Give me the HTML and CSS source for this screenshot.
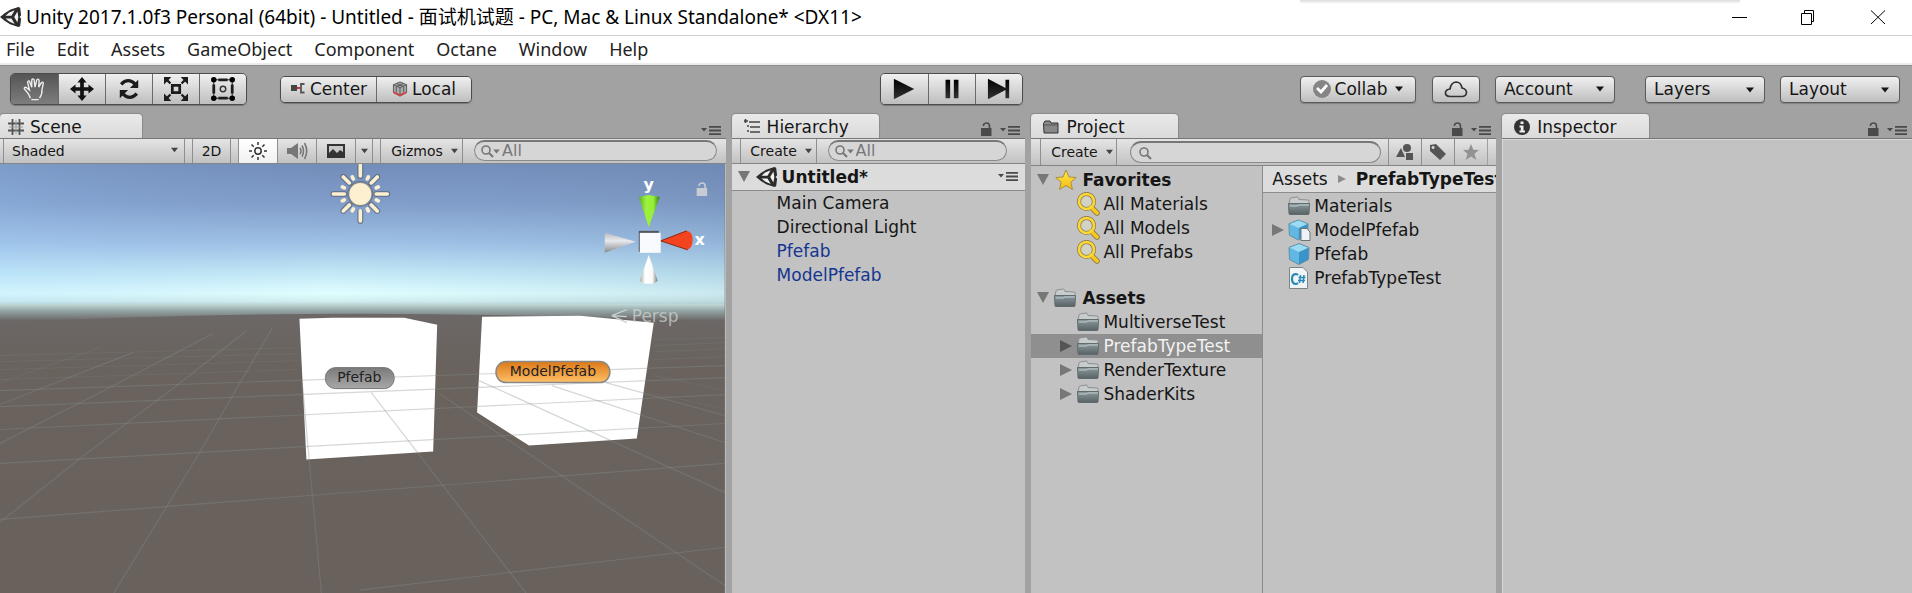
FILE: index.html
```html
<!DOCTYPE html>
<html lang="en">
<head>
<meta charset="utf-8">
<title>Unity 2017.1.0f3 Personal (64bit) - Untitled</title>
<link rel="stylesheet" href="styles.css">
</head>
<body>
<svg class="defs" aria-hidden="true">
  <defs>
    <linearGradient id="gFolder" x1="0" y1="0" x2="0" y2="1"><stop offset="0" stop-color="#8d999c"/><stop offset="1" stop-color="#566265"/></linearGradient>
    <linearGradient id="gGold" x1="0" y1="0" x2="0" y2="1"><stop offset="0" stop-color="#ffe94a"/><stop offset="1" stop-color="#f5bb12"/></linearGradient>
    <linearGradient id="gDark" x1="0" y1="0" x2="0" y2="1"><stop offset="0" stop-color="#000"/><stop offset="1" stop-color="#333"/></linearGradient>
  </defs>
  <symbol id="unity" viewBox="0 0 24 24">
    <path d="M0 12 5 8 11 4 20 1 22 2 23 10 21.500 12 23 14 22 22 20 23 11 20 5 16Z" fill="#2c2c2c"/>
    <path d="M6 10.500 12.500 10.500 16 4.500 10 7ZM6 13.500 12.500 13.500 16 19.500 10 17ZM15.500 12 19 6 20 12 19 18Z" fill="#f2f2f2"/>
  </symbol>
  <symbol id="folder" viewBox="0 0 24 20">
    <path d="M3 3Q3 2 4 2L10 1Q11 1 11.500 2L12 3.500 21 4Q22 4 22 5L22 8 2 8Z" fill="#c9cccc" stroke="#8b9091"/>
    <path d="M1.500 7.500H22.500L22 17.500Q22 18.500 21 18.500H3Q2 18.500 2 17.500Z" fill="url(#gFolder)" stroke="#616b6d"/>
    <path d="M2.500 10H10L12 9H22" fill="none" stroke="#bcd0d3"/>
  </symbol>
  <symbol id="glass" viewBox="0 0 24 24">
    <path d="M15 15 21 21" stroke="#8c8050" stroke-width="5.500" stroke-linecap="round"/>
    <circle cx="10.500" cy="9.500" r="7.500" fill="#d2d2c6" stroke="#8c8050" stroke-width="4.200"/>
    <path d="M15 15 21 21" stroke="#f8c71c" stroke-width="3.800" stroke-linecap="round"/>
    <circle cx="10.500" cy="9.500" r="7.500" fill="none" stroke="#fbd836" stroke-width="2.600"/>
  </symbol>
  <symbol id="cube" viewBox="0 0 24 24">
    <path d="M12 1.500 22 5.500 12 10 2 5.500Z" fill="#9bdcf5"/>
    <path d="M2 5.500 12 10V22.500L2.500 17.500Z" fill="#62b7e3"/>
    <path d="M22 5.500 12 10V22.500L21.500 17.500Z" fill="#3a93c9"/>
    <path d="M12 1.500 22 5.500 21.500 17.500 12 22.500 2.500 17.500 2 5.500Z" fill="none" stroke="#5f8fa6"/>
  </symbol>
  <symbol id="lock" viewBox="0 0 12 14">
    <path d="M3.500 4V3Q4 1 6.500 1 9.500 1 9.500 4V7" fill="none" stroke="currentColor" stroke-width="1.600"/>
    <path d="M1 6H11.500V14H1Z" fill="currentColor"/>
  </symbol>
  <symbol id="pane" viewBox="0 0 20 10">
    <path d="M0 2H6L3 5.500ZM8 0H20V1.800H8ZM8 3.600H20V5.400H8ZM8 7.200H20V9H8Z" fill="currentColor"/>
  </symbol>
  <symbol id="down" viewBox="0 0 8 6"><path d="M0 .5H8L4 5.500Z" fill="currentColor"/></symbol>
  <symbol id="search" viewBox="0 0 18 14">
    <circle cx="5" cy="6" r="4" fill="none" stroke="currentColor" stroke-width="1.600"/>
    <path d="M8 9 12 13" stroke="currentColor" stroke-width="2.200"/>
  </symbol>
</svg>

<header class="titlebar">
  <svg class="logo"><use href="#unity"/></svg>
  <h1 class="caption">Unity 2017.1.0f3 Personal (64bit) - Untitled - 面试机试题 - PC, Mac &amp; Linux Standalone* &lt;DX11&gt;</h1>
  <div class="wincontrols">
    <button class="win" aria-label="Minimize"><svg viewBox="0 0 16 16"><path d="M0 8.500H15"/></svg></button>
    <button class="win" aria-label="Restore"><svg viewBox="0 0 16 16"><path d="M.5 4.500H10.500V15.500H.5ZM3.500 4V1.500H12.500V12.500H11"/></svg></button>
    <button class="win" aria-label="Close"><svg viewBox="0 0 16 16"><path d="M1 1.500 15 15M15 1.500 1 15"/></svg></button>
  </div>
</header>

<nav class="menubar">
  <button>File</button><button>Edit</button><button>Assets</button><button>GameObject</button><button>Component</button><button>Octane</button><button>Window</button><button>Help</button>
</nav>

<div class="toolbar">
  <div class="zone">
    <div class="group tall">
      <button class="btn tool active" aria-label="Hand"><svg viewBox="0 0 26 26"><path d="M8 23Q7 19 4 16L1.500 13Q1 11 3 11L7 14 5 6Q5 4 7 4.500L9.500 11 9.500 3Q10.500 1 12 3L13 11 15 3Q16.500 1.500 17.500 3.500L17 11 20 6Q22 5 22 7L20.500 14Q21 18 18 23M9 24.500H17" fill="none" stroke="#eee" stroke-width="1.500"/></svg></button>
      <button class="btn tool" aria-label="Move"><svg viewBox="0 0 26 26"><path d="M13 0 18 6H15V11H20V8L26 13 20 18V15H15V20H18L13 26 8 20H11V15H6V18L0 13 6 8V11H11V6H8Z" fill="#111"/></svg></button>
      <button class="btn tool" aria-label="Rotate"><svg viewBox="0 0 26 26"><path d="M4.500 8Q12 0 20 8M21.500 18Q14 26 6 18" fill="none" stroke="#1c1c1c" stroke-width="3.600"/><path d="M23 3V12H14ZM3 23V14H12Z" fill="#1c1c1c"/></svg></button>
      <button class="btn tool" aria-label="Scale"><svg viewBox="0 0 26 26"><path d="M9 9H17V17H9Z" fill="none" stroke="#1c1c1c" stroke-width="3"/><path d="M2 2 7 7M24 2 19 7M2 24 7 19M24 24 19 19" stroke="#1c1c1c" stroke-width="2.500"/><path d="M0 0H8L0 8ZM26 0H18L26 8ZM0 26H8L0 18ZM26 26H18L26 18Z" fill="#1c1c1c"/></svg></button>
      <button class="btn tool" aria-label="Rect"><svg viewBox="0 0 26 26"><path d="M8 3H18M8 23H18M3 8V18M23 8V18" fill="none" stroke="#1c1c1c" stroke-width="3"/><path d="M3 3H23V23H3Z" fill="none" stroke="#1c1c1c"/><circle cx="13" cy="13" r="3" fill="none" stroke="#333" stroke-width="1.500"/><circle cx="3" cy="3" r="3"/><circle cx="23" cy="3" r="3"/><circle cx="3" cy="23" r="3"/><circle cx="23" cy="23" r="3"/></svg></button>
    </div>
    <div class="group pivot">
      <button class="btn"><svg class="i16" viewBox="0 0 16 16"><path d="M1 4H7V10H1Z" fill="#444"/><path d="M7 6H10V8H7Z" fill="#c33"/><path d="M14.500 3H11V11.500H14.500" fill="none" stroke="#555" stroke-width="1.800"/></svg>Center</button>
      <button class="btn"><svg class="i16" viewBox="0 0 16 17"><path d="M8 1 15 4V12L8 16 1 12V4Z" fill="#aaa" stroke="#555"/><path d="M1 4 8 7 15 4M8 7V15M4 2.500 12 6V12M12 2.500 4 6V12" fill="none" stroke="#555"/><path d="M1 11 8 14 15 11V13L8 16.500 1 13Z" fill="#c8454a"/></svg>Local</button>
    </div>
  </div>
  <div class="group tall play">
    <button class="btn tool" aria-label="Play"><svg viewBox="0 0 26 26"><path d="M2 2 24 13 2 24Z" fill="url(#gDark)"/></svg></button>
    <button class="btn tool" aria-label="Pause"><svg viewBox="0 0 26 26"><path d="M6 3H11V23H6ZM15 3H20V23H15Z" fill="url(#gDark)"/></svg></button>
    <button class="btn tool" aria-label="Step"><svg viewBox="0 0 26 26"><path d="M1 2 20 12V3H24V23H20V14L1 24Z" fill="url(#gDark)"/></svg></button>
  </div>
  <div class="zone right">
    <button class="btn single collab" aria-haspopup="menu"><svg class="i18" viewBox="0 0 18 18"><circle cx="9" cy="9" r="9" fill="#858585"/><path d="M4 8 8 12 14 5" fill="none" stroke="#fff" stroke-width="2.800"/></svg>Collab<svg class="arrow"><use href="#down"/></svg></button>
    <button class="btn single cloud" aria-label="Cloud"><svg viewBox="0 0 24 18"><path d="M6 16.500Q1 16 1.500 12.500 2 9.500 6 9 7 2.500 12 2 17 2 18 8 22.500 9 22.500 12.500 22 16.500 18 16.500Z" fill="none" stroke="#333" stroke-width="1.700"/></svg></button>
    <button class="btn single wide account" aria-haspopup="menu">Account<svg class="arrow"><use href="#down"/></svg></button>
    <span class="pick wide layers"><select class="btn single" aria-label="Layers"><option>Layers</option></select><svg class="arrow"><use href="#down"/></svg></span>
    <span class="pick wide"><select class="btn single" aria-label="Layout"><option>Layout</option></select><svg class="arrow"><use href="#down"/></svg></span>
  </div>
</div>

<main class="workspace">
  <section class="panel">
    <div class="tabs">
      <button class="tab scenetab"><svg class="i16" viewBox="0 0 16 16"><path d="M4.500 0V16M11.500 0V16M0 4.500H16M0 11.500H16" stroke="#555" stroke-width="1.800"/><path d="M8 1V15M1 8H15" stroke="#999"/></svg>Scene</button>
      <div class="tabtools"><button class="bare" aria-label="Panel menu"><svg class="pane"><use href="#pane"/></svg></button></div>
    </div>
    <div class="bar">
      <span class="pick shade"><select class="cell" aria-label="Shading mode"><option>Shaded</option></select><svg class="arrow"><use href="#down"/></svg></span>
      <span class="spacer"></span>
      <button class="cell twod">2D</button>
      <span class="spacer"></span>
      <button class="cell lit" aria-label="Lighting"><svg class="i18" viewBox="0 0 18 18"><circle cx="9" cy="9" r="3.200" fill="none" stroke="#333" stroke-width="1.500"/><path d="M9 0V3M9 15V18M0 9H3M15 9H18M2.500 2.500 4.700 4.700M15.500 2.500 13.300 4.700M2.500 15.500 4.700 13.300M15.500 15.500 13.300 13.300" stroke="#333" stroke-width="1.500"/></svg></button>
      <button class="cell sound" aria-label="Audio"><svg viewBox="0 0 21 18"><path d="M0 6H4L11 1V17L4 12H0Z" fill="#777"/><path d="M13 6Q15 9 13 12M15 3.500Q18 9 15 14.500M17.500 1Q22 9 17.500 17" fill="none" stroke="#777" stroke-width="1.600"/></svg></button>
      <button class="cell fx" aria-label="Effects"><svg viewBox="0 0 18 14"><path d="M0 0H18V14H0Z" fill="#333"/><path d="M2 2H16V8L13 6 10 9 6 5 2 9Z" fill="#c8c8c8"/></svg></button>
      <button class="cell fxmore" aria-label="Effects menu"><svg class="arrow"><use href="#down"/></svg></button>
      <span class="spacer"></span>
      <button class="cell gizmos" aria-haspopup="menu">Gizmos<svg class="arrow"><use href="#down"/></svg></button>
      <label class="find"><svg class="lens"><use href="#search"/></svg><svg class="tick"><use href="#down"/></svg><input type="search" aria-label="Search scene" placeholder="All"></label>
    </div>
    <svg class="viewport" viewBox="0 0 726 430" preserveAspectRatio="xMinYMin slice" role="img" aria-label="Scene view">
      <defs>
        <linearGradient id="sky" x1="0" y1="0" x2="0" y2="160" gradientUnits="userSpaceOnUse">
          <stop offset="0" stop-color="#738db9"/><stop offset=".25" stop-color="#819dc9"/><stop offset=".5" stop-color="#a0c2e6"/><stop offset=".68" stop-color="#c2e8f6"/><stop offset=".81" stop-color="#e0feff"/><stop offset=".86" stop-color="#d2eeee"/><stop offset=".92" stop-color="#93a4a4"/><stop offset=".98" stop-color="#6c6867"/><stop offset="1" stop-color="#6c6867"/>
        </linearGradient>
        <linearGradient id="skyside" x1="0" y1="0" x2="1" y2="0"><stop offset="0" stop-color="#9ed0ff" stop-opacity=".22"/><stop offset=".45" stop-color="#8bb0e0" stop-opacity="0"/><stop offset="1" stop-color="#587898" stop-opacity=".16"/></linearGradient>
        <linearGradient id="ground" x1="0" y1="0" x2="0" y2="1"><stop offset="0" stop-color="#6c6867"/><stop offset=".2" stop-color="#69625d"/><stop offset="1" stop-color="#69615c"/></linearGradient>
        <linearGradient id="pillGrey" x1="0" y1="0" x2="0" y2="1"><stop offset="0" stop-color="#7a7a7a"/><stop offset="1" stop-color="#a8a8a8"/></linearGradient>
        <linearGradient id="pillOrange" x1="0" y1="0" x2="0" y2="1"><stop offset="0" stop-color="#dc7918"/><stop offset="1" stop-color="#ffc068"/></linearGradient>
        <linearGradient id="coneY" x1="0" y1="0" x2="1" y2="0"><stop offset="0" stop-color="#5cae25"/><stop offset=".35" stop-color="#9df23f"/><stop offset=".7" stop-color="#93ee38"/><stop offset="1" stop-color="#397a12"/></linearGradient>
        <linearGradient id="coneW" x1="0" y1="0" x2="1" y2="0"><stop offset="0" stop-color="#aaa"/><stop offset=".3" stop-color="#fff"/><stop offset=".7" stop-color="#fafafa"/><stop offset="1" stop-color="#777"/></linearGradient>
        <linearGradient id="coneG" x1="0" y1="0" x2="0" y2="1"><stop offset="0" stop-color="#bbb"/><stop offset=".4" stop-color="#e6e9ee"/><stop offset="1" stop-color="#888"/></linearGradient>
      </defs>
      <rect width="726" height="1200" fill="#69615c"/>
      <rect width="726" height="160" fill="url(#sky)"/>
      <rect width="726" height="140" fill="url(#skyside)"/>
      <path d="M0 159Q180 150 360 150T726 159V430H0Z" fill="url(#ground)"/>
      <path d="M300 155 333 154 405 154 438 161 434 288 307 296ZM483 153 581 152 655 159 638 275 530 282 478 249Z" fill="#fff"/>
      <g fill="none" stroke="#84908c" stroke-opacity=".36" stroke-width="1.200">
        <path d="M360 427 726 384M0 356 726 300M0 300 726 260M0 266 726 231M0 243 726 214M0 227 726 202"/>
        <path d="M0 359 80 295 177 222 247 167M114 430 200 289 240 220 273 164M322 430 308 277 303 220M372 229 527 430M440 230 726 422M480 217 726 329M553 222 726 279M607 219 726 252"/>
        <path d="M0 280 110 224 213 170M0 241 133 189"/>
      </g>
      <g fill="none" stroke="#84908c" stroke-opacity=".2">
        <path d="M0 216 299 206M655 196 726 193M0 206 299 197M655 188 726 185M0 198 299 190M655 182 726 179M0 192 299 184M655 176 726 174M0 219 100 184M655 230 726 245M655 212 726 227"/>
      </g>
      <g stroke="#5d6675" stroke-opacity=".7" stroke-width="6" stroke-linecap="round"><path d="M361 2V12M361 48V57M334 30H345M377 30H388M344 13 350 19M378 13 372 19M344 47 350 41M378 47 372 41"/></g>
      <g stroke="#fdf0d0" stroke-width="3.600" stroke-linecap="round"><path d="M361 1V12M361 47V57M334 30H345M377 30H388M344 13 350 19M378 13 372 19M344 47 350 41M378 47 372 41M353 13 354 15M369 13 368 15M343 23 345 24M379 23 377 24M343 37 345 36M379 37 377 36M353 47 354 45M369 47 368 45"/></g>
      <circle cx="361" cy="30" r="12" fill="#fdf0d0" stroke="#5d6675" stroke-opacity=".7" stroke-width="2"/>
      <path d="M640 33 650 31 661 33 650 63Z" fill="url(#coneY)"/>
      <path d="M606 69 637 78 606 89Z" fill="url(#coneG)"/>
      <path d="M650 91 659 117 655 120H645L641 117Z" fill="url(#coneW)"/>
      <path d="M662 77 688 67Q694 68 694 76 694 84 689 86Z" fill="#f4441f"/><path d="M662 77 688 67M662 77 689 86" stroke="#8c2513"/>
      <path d="M640 67H660V88H640Z" fill="#50555f"/><path d="M641 69H662V89H641Z" fill="#f8fafd"/>
      <text class="axis" x="650" y="26" text-anchor="middle">y</text>
      <text class="axis" x="701" y="81" text-anchor="middle">x</text>
      <svg x="697" y="18" width="12" height="14" color="#c7ccd2"><use href="#lock"/></svg>
      <path d="M628 146 613 152 628 153M613 152 628 159" fill="none" stroke="#c8cfce" stroke-width="1.300"/>
      <text class="persp" x="633" y="158">Persp</text>
      <rect x="326" y="204" width="69" height="21" rx="10" fill="url(#pillGrey)" stroke="#777"/>
      <text class="pill" x="360" y="218" text-anchor="middle">Pfefab</text>
      <rect x="497" y="198" width="114" height="21" rx="10" fill="url(#pillOrange)" stroke="#888" stroke-width="1.500"/>
      <text class="pill" x="554" y="212" text-anchor="middle">ModelPfefab</text>
    </svg>
  </section>

  <section class="panel">
    <div class="tabs">
      <button class="tab"><svg class="i16" viewBox="0 0 16 16"><path d="M0 2H4M5 3H16M6 8H16M6 13H16M1.500 0V4M3 7H5M3 12H5" stroke="#444" stroke-width="1.600"/></svg>Hierarchy</button>
      <div class="tabtools"><button class="bare" aria-label="Lock"><svg class="lock"><use href="#lock"/></svg></button><button class="bare" aria-label="Panel menu"><svg class="pane"><use href="#pane"/></svg></button></div>
    </div>
    <div class="bar lead">
      <button class="cell create" aria-haspopup="menu">Create<svg class="arrow"><use href="#down"/></svg></button>
      <label class="find inset"><svg class="lens"><use href="#search"/></svg><svg class="tick"><use href="#down"/></svg><input type="search" aria-label="Search hierarchy" placeholder="All"></label>
    </div>
    <div class="body">
      <div class="root"><svg class="fold" viewBox="0 0 12 12"><path d="M0 0H12L6 11Z"/></svg><svg class="i22"><use href="#unity"/></svg><b>Untitled*</b><button class="bare end" aria-label="Scene menu"><svg class="pane"><use href="#pane"/></svg></button></div>
      <ul class="list objects">
        <li>Main Camera</li><li>Directional Light</li><li class="prefab">Pfefab</li><li class="prefab">ModelPfefab</li>
      </ul>
    </div>
  </section>

  <section class="panel">
    <div class="tabs">
      <button class="tab"><svg class="i16" viewBox="0 0 16 14"><path d="M.5 3.500 2 1H7L8 3H15V13H1Z" fill="#888" stroke="#333"/><path d="M1 5H15" stroke="#555"/></svg>Project</button>
      <div class="tabtools"><button class="bare" aria-label="Lock"><svg class="lock"><use href="#lock"/></svg></button><button class="bare" aria-label="Panel menu"><svg class="pane"><use href="#pane"/></svg></button></div>
    </div>
    <div class="bar lead projectbar">
      <button class="cell create" aria-haspopup="menu">Create<svg class="arrow"><use href="#down"/></svg></button>
      <label class="find"><svg class="lens"><use href="#search"/></svg><input type="search" aria-label="Search project"></label>
      <button class="cell filter" aria-label="Filter by type"><svg viewBox="0 0 18 18"><path d="M0 14 5 5 9 14Z"/><circle cx="11" cy="5" r="4"/><path d="M10 10H17V17H10Z"/></svg></button>
      <button class="cell filter" aria-label="Filter by label"><svg viewBox="0 0 18 18"><path fill-rule="evenodd" d="M1 2 7 1 17 11 11 17 1 8ZM4 3A1.500 1.500 0 1 0 4.100 6 1.500 1.500 0 0 0 4 3Z"/></svg></button>
      <button class="cell filter dim" aria-label="Save search"><svg viewBox="0 0 18 18"><path d="M9 1 11.300 6.800 17 7 12.500 10.800 14.200 17 9 13.400 3.800 17 5.500 10.800 1 7 6.700 6.800Z"/></svg></button>
      <span class="tail"></span>
    </div>
    <div class="body split">
      <ul class="list tree">
        <li class="head"><svg class="fold" viewBox="0 0 12 12"><path d="M0 0H12L6 11Z"/></svg><svg class="i22" viewBox="0 0 22 22"><path d="M11 1 14 8 21.200 8.500 15.800 13.200 17.500 20.500 11 16.500 4.500 20.500 6.200 13.200 .8 8.500 8 8Z" fill="url(#gGold)" stroke="#a98f3c"/></svg><b>Favorites</b></li>
        <li class="child"><svg class="i24"><use href="#glass"/></svg>All Materials</li>
        <li class="child"><svg class="i24"><use href="#glass"/></svg>All Models</li>
        <li class="child"><svg class="i24"><use href="#glass"/></svg>All Prefabs</li>
        <li class="head second"><svg class="fold" viewBox="0 0 12 12"><path d="M0 0H12L6 11Z"/></svg><svg class="folder"><use href="#folder"/></svg><b>Assets</b></li>
        <li class="child"><svg class="folder"><use href="#folder"/></svg>MultiverseTest</li>
        <li class="branch selected"><svg class="fold" viewBox="0 0 12 12"><path d="M0 0 12 6 0 12Z"/></svg><svg class="folder"><use href="#folder"/></svg>PrefabTypeTest</li>
        <li class="branch"><svg class="fold" viewBox="0 0 12 12"><path d="M0 0 12 6 0 12Z"/></svg><svg class="folder"><use href="#folder"/></svg>RenderTexture</li>
        <li class="branch"><svg class="fold" viewBox="0 0 12 12"><path d="M0 0 12 6 0 12Z"/></svg><svg class="folder"><use href="#folder"/></svg>ShaderKits</li>
      </ul>
      <div class="contents">
        <nav class="crumbs" aria-label="Path"><span>Assets</span><svg viewBox="0 0 8 8"><path d="M0 0 8 4 0 8Z"/></svg><b>PrefabTypeTest</b></nav>
        <ul class="list files">
          <li><svg class="folder"><use href="#folder"/></svg>Materials</li>
          <li class="open"><svg class="fold" viewBox="0 0 12 12"><path d="M0 0 12 6 0 12Z"/></svg><svg class="i24" viewBox="0 0 24 24"><svg width="23" height="24"><use href="#cube"/></svg><path d="M14 10.500H20L23 14V22.500H14Z" fill="#f0f3f5" stroke="#6d7478"/></svg>ModelPfefab</li>
          <li><svg class="i24"><use href="#cube"/></svg>Pfefab</li>
          <li><svg class="i24" viewBox="0 0 24 24"><path d="M2.500 1.500H16L20.500 6V22.500H2.500Z" fill="#f1f4f5" stroke="#7b8488"/><path d="M11 9Q10 8 8.500 8 5 8.500 5 13 5 17.500 8.500 18 10 18 11 17" fill="none" stroke="#2489b5" stroke-width="2.200"/><path d="M13.500 9 12.500 17M17 9 16 17M11.500 11.500H18.500M11 14.500H18" stroke="#2489b5" stroke-width="1.500"/></svg>PrefabTypeTest</li>
        </ul>
      </div>
    </div>
  </section>

  <section class="panel">
    <div class="tabs">
      <button class="tab"><svg class="i16" viewBox="0 0 16 16"><circle cx="8" cy="8" r="8" fill="#333"/><path d="M6.500 2.500H9.500V5H6.500ZM5.500 6.500H9.500V11.500H11V13.500H5.500V11.500H6.800V8.500H5.500Z" fill="#eee"/></svg>Inspector</button>
      <div class="tabtools"><button class="bare" aria-label="Lock"><svg class="lock"><use href="#lock"/></svg></button><button class="bare" aria-label="Panel menu"><svg class="pane"><use href="#pane"/></svg></button></div>
    </div>
    <div class="body empty"></div>
  </section>
</main>
</body>
</html>
```
FILE: styles.css
```css
* { box-sizing: border-box; }

body {
  margin: 0;
  min-height: 100vh;
  display: flex;
  flex-direction: column;
  background: #a2a2a2;
  color: #161616;
  font: 17px/24px "DejaVu Sans", Verdana, sans-serif;
}

button, input, select { font: inherit; color: inherit; margin: 0; padding: 0; border: 0; background: none; border-radius: 0; }
svg { display: block; flex: none; }
.defs { position: absolute; width: 0; height: 0; }

.i16 { width: 16px; height: 16px; }
.i18 { width: 18px; height: 18px; }
.i22 { width: 22px; height: 22px; }
.i24 { width: 24px; height: 24px; }
.folder { width: 24px; height: 20px; }
.lock { width: 12px; height: 14px; }
.pane { width: 20px; height: 10px; }
.arrow { width: 8px; height: 6px; }
.bare { display: flex; color: #4a4a4a; }

/* Window caption and menu */
.titlebar {
  position: relative;
  display: flex;
  align-items: center;
  height: 36px;
  padding-bottom: 2px;
  border-bottom: 1px solid #cfcfcf;
  background: #fff;
}
.titlebar::before {
  content: "";
  position: absolute;
  top: 0;
  left: 68%;
  width: 23%;
  height: 4px;
  background: linear-gradient(#dcdcdc, #fff);
}
.logo { width: 22px; height: 24px; }
.caption {
  flex: 1;
  margin: 0 0 0 4px;
  font: 400 19px/28px "Noto Sans", "Noto Sans CJK SC", sans-serif;
  color: #000;
}
.wincontrols { display: flex; }
.win { width: 69px; height: 33px; display: grid; place-items: center; }
.win svg { width: 16px; height: 16px; fill: none; stroke: #000; }

.menubar {
  display: flex;
  gap: 22px;
  height: 29px;
  padding-left: 6px;
  background: #fff;
  border-bottom: 2px solid #ececec;
}
.menubar button { font: 18px/24px "Noto Sans", sans-serif; color: #222; padding-bottom: 2px; }

/* Main toolbar */
.toolbar {
  display: grid;
  grid-template-columns: 1fr auto 1fr;
  align-items: center;
  height: 49px;
  padding: 0 12px 2px 10px;
  border-top: 1px solid #8e8e8e;
}
.zone { display: flex; align-items: center; }
.zone.right { justify-content: flex-end; }
.group { display: flex; border: 1px solid #4c4c4c; border-radius: 5px; overflow: hidden; box-shadow: 0 1px 1px #777; }
.btn {
  display: flex;
  align-items: center;
  justify-content: center;
  height: 25px;
  gap: 4px;
  background: linear-gradient(#f0f0f0, #bebebe);
}
.group .btn + .btn { border-left: 1px solid #6a6a6a; }
.tall .btn { height: 30px; }
.tool { width: 47px; }
.tool svg { width: 24px; height: 24px; }
.tool.active { background: linear-gradient(#555, #7d7d7d); }
.play { margin-right: 8px; }
.pivot { margin-left: 33px; }
.pivot .btn { width: 95px; }
.single { height: 27px; border: 1px solid #5a5a5a; border-radius: 4px; box-shadow: 0 1px 1px #808080; }
.collab { width: 116px; }
.collab .arrow { margin-left: 4px; }
.cloud { width: 48px; margin: 0 15px 0 16px; }
.cloud svg { width: 24px; height: 18px; }
.wide { width: 120px; }
.account { justify-content: space-between; padding: 0 10px 0 8px; margin-right: 30px; }
.layers { margin-right: 15px; }
.pick { position: relative; display: flex; }
.pick select { flex: 1; width: 100%; appearance: none; padding-left: 8px; }
.pick .arrow { position: absolute; right: 11px; top: 11px; pointer-events: none; }

/* Docked panels */
.workspace {
  flex: 1;
  display: grid;
  grid-template-columns: minmax(0, 726fr) minmax(0, 294fr) minmax(0, 465fr) minmax(0, 410fr);
  gap: 6px;
}
.panel { display: flex; flex-direction: column; min-width: 0; }
.tabs { display: flex; justify-content: space-between; height: 25px; border-bottom: 1px solid #777; }
.tab {
  display: flex;
  align-items: center;
  gap: 7px;
  width: 147px;
  padding: 1px 0 0 12px;
  background: linear-gradient(#eaeaea, #dadada);
  border-radius: 4px 4px 0 0;
  box-shadow: 0 0 1px 1px #8a8a8a;
  clip-path: inset(-2px -2px 0 -2px);
}
.scenetab { width: 142px; padding-left: 8px; gap: 6px; }
.tabtools { display: flex; align-items: flex-end; gap: 8px; padding: 0 5px 2px 0; }

.bar {
  display: flex;
  height: 25px;
  padding-left: 3px;
  background: linear-gradient(#e4e4e4, #c2c2c2);
  border-bottom: 1px solid #858585;
  font-size: 14px;
}
.lead { padding-left: 8px; }
.projectbar { height: 27px; padding-left: 9px; }
.cell { display: flex; align-items: center; justify-content: center; gap: 8px; border-left: 1px solid #8f8f8f; }
.shade { flex: 0 0 181px; }
.shade .cell { padding-left: 8px; }
.bar .arrow { width: 7px; color: #444; }
.shade .arrow { right: 6px; top: 8px; }
.spacer { width: 8px; border-left: 1px solid #8f8f8f; }
.twod { width: 38px; }
.lit { width: 39px; background: linear-gradient(#fff, #f1f1f1); }
.sound { width: 39px; }
.sound svg { width: 21px; height: 18px; }
.fx { width: 39px; }
.fx svg { width: 18px; height: 14px; }
.fxmore { width: 17px; }
.gizmos { width: 83px; padding-left: 6px; border-right: 1px solid #8f8f8f; }
.create { width: 77px; padding-left: 6px; border-right: 1px solid #8f8f8f; }

.find {
  flex: 1;
  min-width: 0;
  display: flex;
  align-items: center;
  margin: 1px 9px 2px 11px;
  padding-left: 6px;
  border: 1px solid #8a8a8a;
  border-top: 2px solid #777;
  border-radius: 11px;
  background: #d6d6d6;
  color: #777;
}
.inset { margin-right: 18px; }
.projectbar .find { margin: 2px 7px 2px 13px; padding-left: 8px; }
.lens { width: 18px; height: 14px; margin-right: -6px; }
.tick { width: 7px; height: 5px; }
.find input { flex: 1; min-width: 0; height: 18px; padding-left: 2px; outline: 0; font-size: 16px; line-height: 18px; appearance: none; }
.find input::placeholder { color: #777; opacity: 1; }
.filter { width: 33px; }
.filter svg { width: 18px; height: 18px; fill: #555; }
.dim svg { fill: #929292; }
.tail { width: 9px; border-left: 1px solid #a0a0a0; }

.viewport { flex: 1; width: 100%; height: 0; min-height: 0; border-right: 1px solid #bbb; }
.axis { font: bold 16px "DejaVu Sans", sans-serif; fill: #fff; }
.persp { font: 17px "DejaVu Sans", sans-serif; fill: #d0d2d1; fill-opacity: .75; }
.pill { font: 14px "DejaVu Sans", sans-serif; fill: #222; }

.body { flex: 1; min-width: 0; background: #c2c2c2; }
.empty { border-top: 1px solid #d8d8d8; border-left: 1px solid #d8d8d8; }
.list { list-style: none; margin: 0; padding: 0; }
.list li { display: flex; align-items: center; gap: 3px; height: 24px; white-space: nowrap; }
.fold { width: 12px; height: 12px; fill: #777; }
.root { display: flex; align-items: center; height: 27px; padding: 0 7px 0 6px; background: #dcdcdc; border-bottom: 1px solid #8c8c8c; }
.root .fold, .head .fold { margin-right: 6px; }
.root b { margin-left: 4px; }
.end { margin-left: auto; }
.objects li { padding-left: 45px; }
.prefab { color: #143591; }

.split { display: grid; grid-template-columns: minmax(0, 231fr) minmax(0, 234fr); }
.tree { padding-top: 2px; }
.list .head { padding-left: 6px; gap: 0; }
.head .folder { margin-left: -2px; }
.head b { margin-left: 5px; }
.list .second { margin-top: 22px; }
.child { padding-left: 45px; }
.list .branch { padding-left: 29px; gap: 4px; }
.branch .folder { margin-right: -1px; }
.selected { background: #8f8f8f; color: #f2f2f2; }
.selected .fold { fill: #555; }
.contents { min-width: 0; border-left: 1px solid #8c8c8c; }
.crumbs { display: flex; align-items: center; gap: 10px; height: 27px; padding-left: 9px; background: #dcdcdc; border-bottom: 1px solid #8c8c8c; overflow: hidden; white-space: nowrap; }
.crumbs svg { width: 8px; height: 8px; fill: #8c8c8c; }
.files { padding-top: 1px; }
.files li { padding-left: 24px; }
.list .open { padding-left: 9px; }
```
